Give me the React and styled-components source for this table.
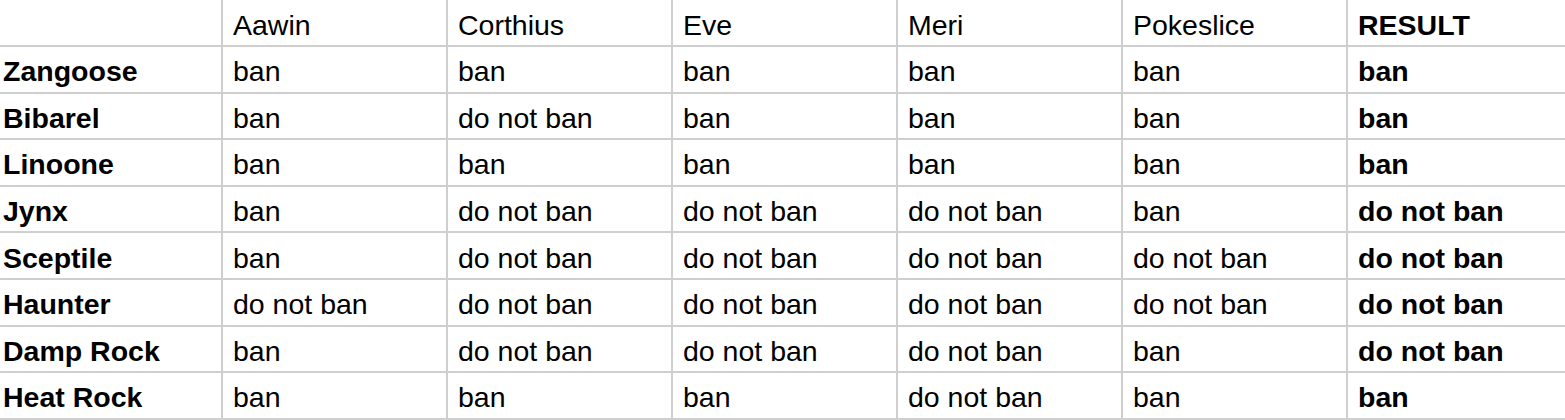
import styled, { createGlobalStyle } from "styled-components";

const GlobalStyle = createGlobalStyle`
  html, body {
    margin: 0;
    padding: 0;
    background: #ffffff;
    overflow: hidden;
  }
`;

const voters = ["Aawin", "Corthius", "Eve", "Meri", "Pokeslice"];

const rows = [
  ["Zangoose", ["ban", "ban", "ban", "ban", "ban"], "ban"],
  ["Bibarel", ["ban", "do not ban", "ban", "ban", "ban"], "ban"],
  ["Linoone", ["ban", "ban", "ban", "ban", "ban"], "ban"],
  ["Jynx", ["ban", "do not ban", "do not ban", "do not ban", "ban"], "do not ban"],
  ["Sceptile", ["ban", "do not ban", "do not ban", "do not ban", "do not ban"], "do not ban"],
  ["Haunter", ["do not ban", "do not ban", "do not ban", "do not ban", "do not ban"], "do not ban"],
  ["Damp Rock", ["ban", "do not ban", "do not ban", "do not ban", "ban"], "do not ban"],
  ["Heat Rock", ["ban", "ban", "ban", "do not ban", "ban"], "ban"],
];

const Sheet = styled.div`
  display: grid;
  grid-template-columns: 223px repeat(6, 225px);
  grid-template-rows: 47px repeat(8, 46.6px);
  width: max-content;
  font-family: "Liberation Sans", Arial, sans-serif;
  color: #000;
`;

const Cell = styled.div`
  display: flex;
  align-items: center;
  padding: 5px 0 0 ${(p) => (p.$first ? "3px" : "10px")};
  border-bottom: 2px solid #cfcfcf;
  border-right: 2px solid #cfcfcf;
  font-size: 28.5px;
  font-weight: ${(p) => (p.$bold ? 700 : 400)};
  white-space: nowrap;
  overflow: hidden;
`;

export default function App() {
  return (
    <>
      <GlobalStyle />
      <Sheet>
        <Cell $first />
        {voters.map((v) => (
          <Cell key={v}>{v}</Cell>
        ))}
        <Cell $bold>RESULT</Cell>
        {rows.map(([name, votes, result]) => [
          <Cell key={name} $first $bold>
            {name}
          </Cell>,
          ...votes.map((vote, i) => <Cell key={name + i}>{vote}</Cell>),
          <Cell key={name + "r"} $bold>
            {result}
          </Cell>,
        ])}
      </Sheet>
    </>
  );
}
